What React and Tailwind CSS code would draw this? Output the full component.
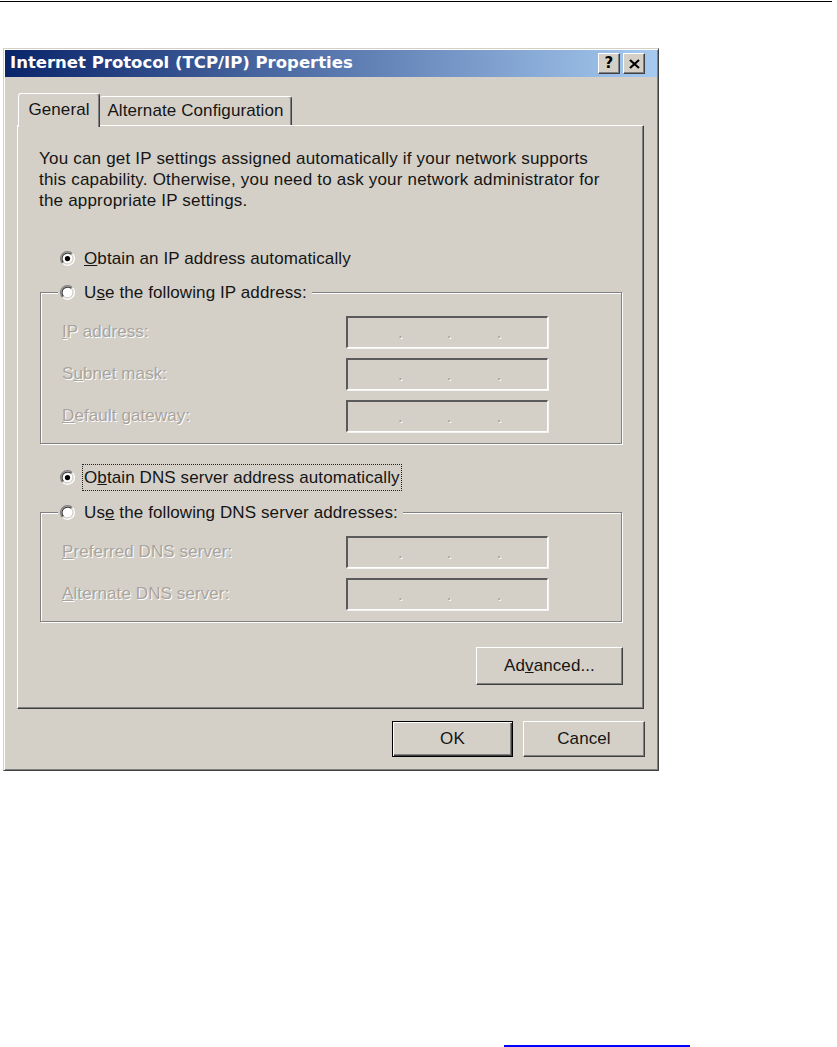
import React from "react";

// classic win2k radio, drawn as two bevelled rings
const Radio = ({ checked }) => (
  <svg width="15" height="15" viewBox="0 0 12 12" className="shrink-0">
    <circle cx="6" cy="6" r="5" fill="#fff" />
    <path d="M2.11 9.89 A5.5 5.5 0 0 1 9.89 2.11" fill="none" stroke="#808080" strokeWidth="1" />
    <path d="M9.89 2.11 A5.5 5.5 0 0 1 2.11 9.89" fill="none" stroke="#ffffff" strokeWidth="1" />
    <path d="M2.82 9.18 A4.5 4.5 0 0 1 9.18 2.82" fill="none" stroke="#404040" strokeWidth="1" />
    <path d="M9.18 2.82 A4.5 4.5 0 0 1 2.82 9.18" fill="none" stroke="#d4d0c8" strokeWidth="1" />
    {checked && <circle cx="6" cy="6" r="2.1" fill="#000" />}
  </svg>
);

const RadioRow = ({ checked, focused, children }) => (
  <div className="flex items-center h-[27px]">
    <Radio checked={checked} />
    <span
      className={`ml-[7px] px-[1px] leading-[25px] border ${
        focused ? "border-dotted border-[#222]" : "border-transparent"
      }`}
    >
      {children}
    </span>
  </div>
);

const IpBox = () => (
  <div className="flex items-center w-[202px] h-[32px] border-t-2 border-l-2 border-b border-r border-t-[#5a5a5a] border-l-[#5a5a5a] border-b-white border-r-white shadow-[1px_1px_0_#f4f4f4] bg-[#d4d0c8] text-[#a5a19a] [text-shadow:1px_1px_0_#fff]">
    <span className="ml-[50px]">.</span>
    <span className="ml-[44px]">.</span>
    <span className="ml-[45px]">.</span>
  </div>
);

const FieldRow = ({ children }) => (
  <div className="flex items-center h-[32px]">
    <span className="w-[284px] text-[#a8a49d] [text-shadow:1px_1px_0_#fff]">{children}</span>
    <IpBox />
  </div>
);

const Group = ({ legend, children }) => (
  <fieldset className="ml-[1px] w-[582px] border border-[#808080] shadow-[inset_1px_1px_0_#fff,1px_1px_0_#fff] pb-[11px]">
    <legend className="ml-[17px] pl-[2px] pr-[3px] bg-[#d4d0c8]">{legend}</legend>
    <div className="flex flex-col gap-[10px] pt-[10px] pl-[21px]">{children}</div>
  </fieldset>
);

const CaptionBtn = ({ children }) => (
  <div className="flex items-center justify-center w-[22px] h-[21px] bg-[#d4d0c8] border border-t-white border-l-white border-b-[#404040] border-r-[#404040] shadow-[inset_-1px_-1px_0_#808080]">
    {children}
  </div>
);

const Button = ({ children, className = "" }) => (
  <div
    className={`flex items-center justify-center bg-[#d4d0c8] border border-t-white border-l-white border-b-[#404040] border-r-[#404040] shadow-[inset_-1px_-1px_0_#808080] ${className}`}
  >
    {children}
  </div>
);

export default function App() {
  return (
    <div className="w-[837px] h-[1047px] bg-white overflow-hidden font-['Liberation_Sans',Arial,sans-serif] text-[17px] tracking-[0.1px] text-[#151515]">
      <div className="mt-[1px] h-[1px] w-[832px] bg-black" />

      {/* dialog */}
      <div className="mt-[46px] ml-[3px] w-[656px] h-[723px] p-[1px] bg-[#d4d0c8] border border-t-[#d4d0c8] border-l-[#d4d0c8] border-b-[#404040] border-r-[#404040] shadow-[inset_1px_1px_0_#fff,inset_-1px_-1px_0_#808080]">
        <div className="flex items-center justify-between h-[27px] pl-[5px] pr-[12px] bg-[linear-gradient(to_right,#0a246a,#a6caf0)]">
          <span className="font-['DejaVu_Sans',Verdana,sans-serif] font-bold text-[16.5px] tracking-normal text-white leading-none">
            Internet Protocol (TCP/IP) Properties
          </span>
          <div className="flex gap-[3px]">
            <CaptionBtn>
              <span className="font-['DejaVu_Sans',Verdana,sans-serif] font-bold text-[15px] leading-none text-black">?</span>
            </CaptionBtn>
            <CaptionBtn>
              <svg width="11" height="10" viewBox="0 0 11 10">
                <path d="M1 1 L10 9 M10 1 L1 9" stroke="#000" strokeWidth="2.2" />
              </svg>
            </CaptionBtn>
          </div>
        </div>

        <div className="pt-[16px] pl-[12px]">
          {/* tabs */}
          <div className="flex items-end h-[32px]">
            <div className="relative z-10 ml-[1px] mb-[-2px] flex items-center justify-center w-[82px] h-[34px] pb-[2px] bg-[#d4d0c8] rounded-t-[3px] border-t border-l border-r border-t-white border-l-white border-r-[#404040] shadow-[inset_-1px_0_0_#808080]">
              General
            </div>
            <div className="flex items-center justify-center w-[192px] h-[29px] bg-[#d4d0c8] rounded-t-[3px] border-t border-r border-t-white border-r-[#404040] shadow-[inset_-1px_0_0_#808080]">
              Alternate Configuration
            </div>
          </div>

          {/* panel */}
          <div className="flex flex-col w-[627px] h-[584px] pt-[22px] pl-[21px] pr-[20px] border border-t-white border-l-white border-b-[#404040] border-r-[#404040] shadow-[inset_-1px_-1px_0_#808080]">
            <p className="leading-[21px] tracking-[0.2px] whitespace-nowrap">
              You can get IP settings assigned automatically if your network supports
              <br />
              this capability. Otherwise, you need to ask your network administrator for
              <br />
              the appropriate IP settings.
            </p>

            <div className="mt-[34px] pl-[21px]">
              <RadioRow checked>
                <span className="underline">O</span>btain an IP address automatically
              </RadioRow>
            </div>

            <div className="mt-[7px]">
              <Group
                legend={
                  <RadioRow>
                    U<span className="underline">s</span>e the following IP address:
                  </RadioRow>
                }
              >
                <FieldRow>
                  <span className="underline">I</span>P address:
                </FieldRow>
                <FieldRow>
                  S<span className="underline">u</span>bnet mask:
                </FieldRow>
                <FieldRow>
                  <span className="underline">D</span>efault gateway:
                </FieldRow>
              </Group>
            </div>

            <div className="mt-[20px] pl-[21px]">
              <RadioRow checked focused>
                O<span className="underline">b</span>tain DNS server address automatically
              </RadioRow>
            </div>

            <div className="mt-[8px]">
              <Group
                legend={
                  <RadioRow>
                    Us<span className="underline">e</span> the following DNS server addresses:
                  </RadioRow>
                }
              >
                <FieldRow>
                  <span className="underline">P</span>referred DNS server:
                </FieldRow>
                <FieldRow>
                  <span className="underline">A</span>lternate DNS server:
                </FieldRow>
              </Group>
            </div>

            <div className="flex justify-end mt-[25px]">
              <Button className="w-[147px] h-[38px]">
                Ad<span className="underline">v</span>anced...
              </Button>
            </div>
          </div>
        </div>

        <div className="flex justify-end gap-[10px] mt-[12px] pr-[12px]">
          <div className="w-[121px] h-[36px] border border-black">
            <div className="flex items-center justify-center w-full h-full bg-[#d4d0c8] shadow-[inset_1px_1px_0_#fff,inset_-1px_-1px_0_#404040,inset_-2px_-2px_0_#808080]">
              OK
            </div>
          </div>
          <Button className="w-[122px] h-[36px]">Cancel</Button>
        </div>
      </div>

      <div className="mt-[274px] ml-[504px] w-[186px] h-[2px] bg-[#0000ff]" />
    </div>
  );
}
